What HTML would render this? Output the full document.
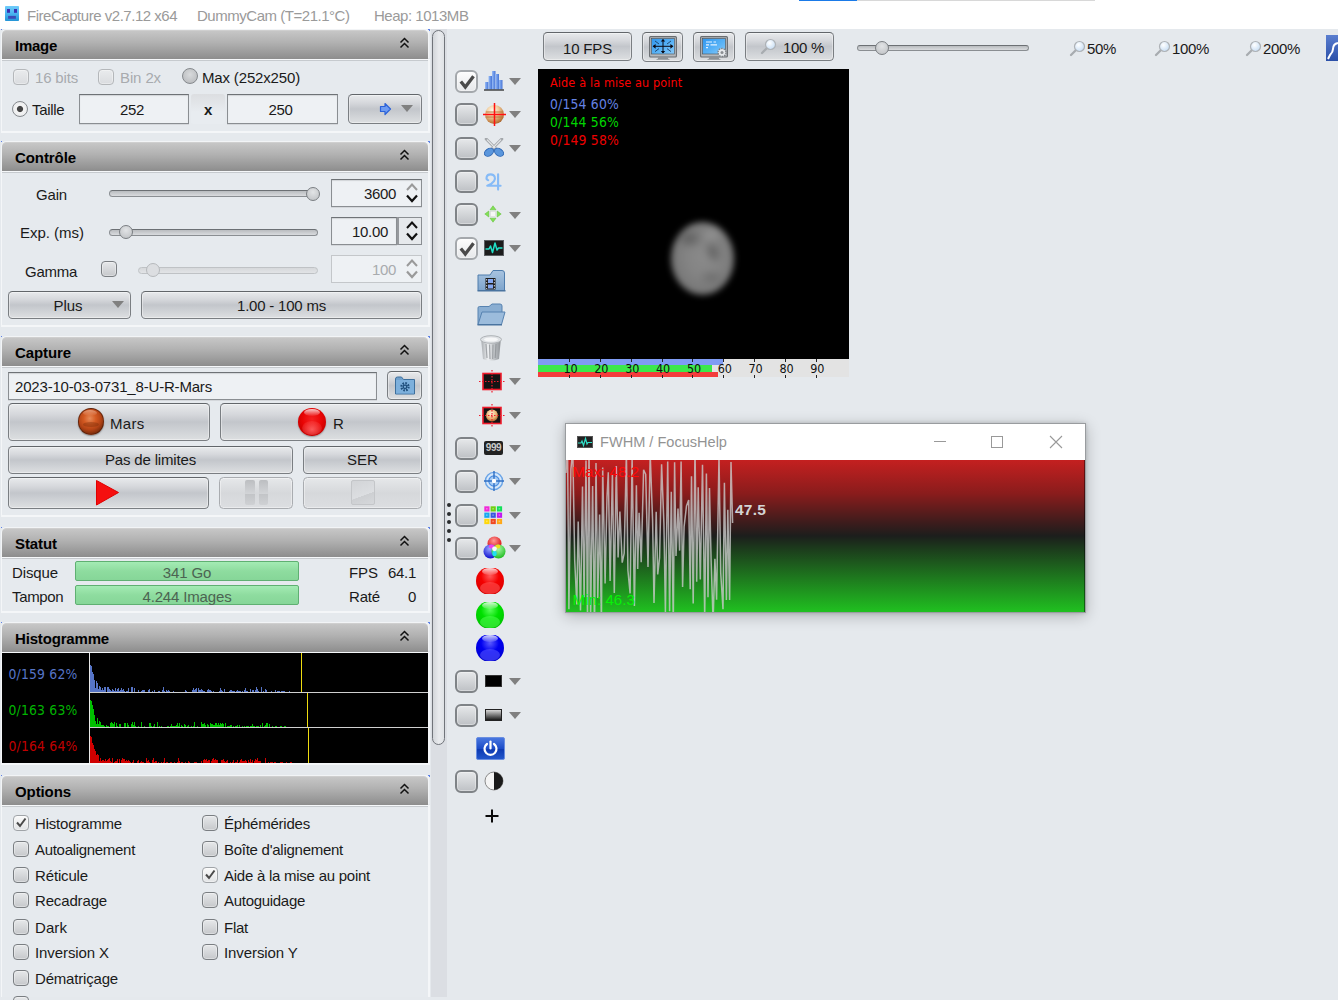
<!DOCTYPE html>
<html lang="fr"><head><meta charset="utf-8"><title>FireCapture</title>
<style>
*{box-sizing:border-box;margin:0;padding:0}
html,body{width:1338px;height:1000px;overflow:hidden;background:#e5e9ed;font-family:"Liberation Sans",sans-serif;font-size:15px;color:#1a1a1a}
.a{position:absolute}
#tb{left:0;top:0;width:1338px;height:28.7px;background:#fff}
#tb span{position:absolute;top:6.5px;font-size:15px;letter-spacing:-.47px;color:#9a9a9a;white-space:nowrap;line-height:17px}
.hdr{box-shadow:0 -1px 0 #f2f4f6,1.5px -1px 0 #f2f4f6,-1px 0 0 #f2f4f6;position:absolute;left:2px;width:425.5px;height:28.5px;margin-top:1px;border-radius:4.5px 4.5px 0 0;background:linear-gradient(#c6c6c6,#b2b2b2 40%,#8d8d8d);font-weight:bold;font-size:15px;line-height:17px;color:#000;padding:6px 0 0 13px;border-top:1px solid #cfcfcf}
.hdr svg{position:absolute;right:17.5px;top:6px}
.body{position:absolute;left:1px;width:428.5px;background:#e6eaee;border-left:1px solid #f4f6f8;border-right:2px solid #f4f6f8;border-bottom:2px solid #f4f6f8;border-top:1.5px solid #f6f8fa;box-shadow:inset 0 1px 0 #c6cace}
.btn{position:absolute;border:1.3px solid #7a7e82;border-top-color:#62666a;border-radius:4.5px;background:linear-gradient(#e8eaec,#d6d8dc 28%,#c3c6cb 50%,#cdd0d4 70%,#dddfe1);box-shadow:inset 0 0 0 1px rgba(255,255,255,.4);text-align:center;white-space:nowrap}
.btn.dis{border-color:#a9acb0;background:linear-gradient(#e6e8ea,#d6d8db 50%,#dcdee1)}
.tf{position:absolute;border:1px solid #8a8e92;border-top-color:#6e7276;background:#eef1f4;box-shadow:inset 0 1px 1px rgba(0,0,0,.12),0 1px 0 rgba(0,0,0,.08);white-space:nowrap}
.cb{position:absolute;width:16px;height:16px;border:1.3px solid #7a7e82;border-radius:4px;background:linear-gradient(#e6e8ea,#c6c8cb);box-shadow:inset 0 0 0 1px rgba(255,255,255,.35)}
.cb.on{background:linear-gradient(#fafafa,#e2e4e6);border-color:#a0a4a8}
.cb.dis{border-color:#b4b7ba;background:linear-gradient(#e9ebed,#dadcdf)}
.cb svg{position:absolute;left:0;top:0}
.cbx{position:absolute;width:23px;height:23px;border:2px solid #7f8387;border-radius:6px;background:linear-gradient(#e6e8ea,#bec1c5);box-shadow:inset 0 0 0 1px rgba(255,255,255,.35)}
.cbx.on{background:linear-gradient(#fdfdfd,#e6e8ea);border-color:#a4a8ac}
.rb{position:absolute;width:16px;height:16px;border:1px solid #85898d;border-radius:50%;background:radial-gradient(circle at 50% 40%,#d8dadc,#b4b6b9)}
.rb.on{background:radial-gradient(circle at 50% 50%,#444 0,#444 2.6px,#f4f4f4 3.6px,#e4e6e8 100%)}
.t{position:absolute;white-space:nowrap;line-height:17px}
.trk{position:absolute;height:7px;border-radius:4px;border:1px solid #8a8e92;border-top-color:#6c7074;background:linear-gradient(#b9bcbf,#d9dbde)}
.trk.dis{border-color:#bfc2c5;background:linear-gradient(#d6d8db,#e2e4e6)}
.thumb{position:absolute;width:14px;height:14px;border-radius:50%;border:1px solid #7a7e82;background:radial-gradient(circle at 50% 35%,#e2e4e6,#bcbfc2)}
.thumb.dis{border-color:#b6b9bc;background:#dcdee1}
.arr{position:absolute;width:0;height:0;border-left:6.7px solid transparent;border-right:6.7px solid transparent;border-top:7.3px solid #808080}
.tah{font-family:"DejaVu Sans Condensed","DejaVu Sans",sans-serif}
</style></head>
<body>
<div class="a" id="tb"><span style="left:27px">FireCapture v2.7.12 x64</span><span style="left:197px">DummyCam (T=21.1°C)</span><span style="left:374px">Heap: 1013MB</span></div>
<svg class="a" style="left:5px;top:6px" width="14" height="15" viewBox="0 0 14 15"><defs><linearGradient id="ic" x1="0" y1="0" x2="0" y2="1"><stop offset="0" stop-color="#70ccfa"/><stop offset=".5" stop-color="#4ab4f0"/><stop offset="1" stop-color="#2494d6"/></linearGradient></defs><rect width="14" height="15" rx=".8" fill="url(#ic)"/><rect x="2" y="3" width="3" height="3.8" fill="#3a30b0"/><rect x="9" y="3" width="3" height="3.8" fill="#3a30b0"/><rect x="3.1" y="9.9" width="7.8" height="2.9" fill="#3c4cb6"/></svg>
<div class="a" style="left:799px;top:0;width:58px;height:1px;background:#1a7ae8"></div><div class="a" style="left:857px;top:0;width:238px;height:1px;background:#d8d8d8"></div>
<div class="hdr" style="top:29px;letter-spacing:-0.270px;">Image<svg width="11" height="12" viewBox="0 0 11 12"><path d="M1.5 5.5 L5.5 1.5 L9.5 5.5 M1.5 10.5 L5.5 6.5 L9.5 10.5" fill="none" stroke="#111" stroke-width="1.5"/></svg></div><div class="a" style="left:1px;top:29px;width:2px;height:2px;background:linear-gradient(135deg,#5f82e6 50%,transparent 50%)"></div><div class="a" style="left:427.5px;top:29px;width:2px;height:2.5px;background:linear-gradient(225deg,#5f82e6 50%,transparent 50%)"></div>
<div class="body" style="top:58.5px;height:74.5px"></div>
<div class="cb dis" style="left:13px;top:69px"></div>
<div class="t " style="left:35px;top:69px;letter-spacing:-0.171px;color:#a8abae">16 bits</div>
<div class="cb dis" style="left:98px;top:69px"></div>
<div class="t " style="left:120px;top:69px;letter-spacing:-0.115px;color:#a8abae">Bin 2x</div>
<div class="rb" style="left:182px;top:68px"></div>
<div class="t " style="left:202px;top:69px;letter-spacing:-0.158px;">Max (252x250)</div>
<div class="rb on" style="left:12px;top:101px"></div>
<div class="t " style="left:32px;top:101px;letter-spacing:-0.307px;">Taille</div>
<div class="tf" style="left:79px;top:94px;width:110px;height:30px;line-height:29px;letter-spacing:-0.342px;text-align:center;padding-right:4px">252</div>
<div class="a" style="left:191px;top:94px;width:34px;height:30px;background:linear-gradient(#dcdee1,#e8ecf0 60%);border-radius:3px"></div>
<div class="t " style="left:204px;top:101px;letter-spacing:-0.342px;font-weight:bold">x</div>
<div class="tf" style="left:227px;top:94px;width:111px;height:30px;line-height:29px;letter-spacing:-0.342px;text-align:center;padding-right:4px">250</div>
<div class="btn " style="left:348px;top:94px;width:74px;height:30px;line-height:28px;"></div>
<svg class="a" style="left:379px;top:102px" width="13" height="14" viewBox="0 0 13 14"><path d="M1.5 4.5 H6 V1.5 L11.5 7 L6 12.5 V9.5 H1.5 Z" fill="#6f9cf2" stroke="#2c62d8" stroke-width="1.2" stroke-linejoin="round"/></svg>
<div class="arr" style="left:401px;top:105px"></div>
<div class="hdr" style="top:141px;letter-spacing:-0.083px;">Contrôle<svg width="11" height="12" viewBox="0 0 11 12"><path d="M1.5 5.5 L5.5 1.5 L9.5 5.5 M1.5 10.5 L5.5 6.5 L9.5 10.5" fill="none" stroke="#111" stroke-width="1.5"/></svg></div><div class="a" style="left:1px;top:141px;width:2px;height:2px;background:linear-gradient(135deg,#5f82e6 50%,transparent 50%)"></div><div class="a" style="left:427.5px;top:141px;width:2px;height:2.5px;background:linear-gradient(225deg,#5f82e6 50%,transparent 50%)"></div>
<div class="body" style="top:170.5px;height:156.5px"></div>
<div class="t " style="left:36px;top:186px;letter-spacing:-0.171px;">Gain</div>
<div class="trk" style="left:109px;top:190px;width:209px"></div><div class="thumb" style="left:306px;top:187px"></div>
<div class="tf" style="left:331px;top:179px;width:91px;height:28px;line-height:27px;letter-spacing:-0.342px;text-align:right;padding-right:25px">3600</div>
<svg class="a" style="left:405px;top:181px" width="14" height="24" viewBox="0 0 14 24"><path d="M2 9 L7 3.5 L12 9" fill="none" stroke="#9a9a9a" stroke-width="2"/><path d="M2 14.5 L7 20 L12 14.5" fill="none" stroke="#111" stroke-width="2.2"/></svg>
<div class="t " style="left:20px;top:224px;letter-spacing:-0.019px;">Exp. (ms)</div>
<div class="trk" style="left:109px;top:229px;width:209px"></div><div class="thumb" style="left:119px;top:225px"></div>
<div class="tf" style="left:331px;top:217px;width:66px;height:28px;line-height:27px;letter-spacing:-0.307px;text-align:right;padding-right:8px">10.00</div>
<div class="a" style="left:397px;top:217px;width:25px;height:28px;border:1px solid #8a8e92;border-left:2px solid #96999d;background:#e6e9ec"></div>
<svg class="a" style="left:405px;top:219px" width="14" height="24" viewBox="0 0 14 24"><path d="M2 9 L7 3.5 L12 9" fill="none" stroke="#111" stroke-width="2"/><path d="M2 14.5 L7 20 L12 14.5" fill="none" stroke="#111" stroke-width="2.2"/></svg>
<div class="t " style="left:25px;top:263px;letter-spacing:-0.268px;">Gamma</div>
<div class="cb" style="left:101px;top:261px"></div>
<div class="trk dis" style="left:138px;top:267px;width:180px"></div><div class="thumb dis" style="left:146px;top:263px"></div>
<div class="tf" style="left:331px;top:255px;width:91px;height:28px;line-height:27px;letter-spacing:-0.342px;text-align:right;padding-right:25px;color:#a8abae;border-color:#c4c7ca;box-shadow:none">100</div>
<svg class="a" style="left:405px;top:257px" width="14" height="24" viewBox="0 0 14 24"><path d="M2 9 L7 3.5 L12 9" fill="none" stroke="#9a9a9a" stroke-width="2"/><path d="M2 14.5 L7 20 L12 14.5" fill="none" stroke="#9a9a9a" stroke-width="2.2"/></svg>
<div class="btn " style="left:8px;top:291px;width:123px;height:28px;line-height:26px;letter-spacing:-0.045px;padding-right:3px;padding-top:1px">Plus</div>
<div class="arr" style="left:112px;top:301px"></div>
<div class="btn " style="left:141px;top:291px;width:281px;height:28px;line-height:26px;letter-spacing:-0.209px;padding-top:1px">1.00 - 100 ms</div>
<div class="hdr" style="top:336px;letter-spacing:-0.096px;">Capture<svg width="11" height="12" viewBox="0 0 11 12"><path d="M1.5 5.5 L5.5 1.5 L9.5 5.5 M1.5 10.5 L5.5 6.5 L9.5 10.5" fill="none" stroke="#111" stroke-width="1.5"/></svg></div><div class="a" style="left:1px;top:336px;width:2px;height:2px;background:linear-gradient(135deg,#5f82e6 50%,transparent 50%)"></div><div class="a" style="left:427.5px;top:336px;width:2px;height:2.5px;background:linear-gradient(225deg,#5f82e6 50%,transparent 50%)"></div>
<div class="body" style="top:365.5px;height:151.5px"></div>
<div class="tf" style="left:8px;top:372px;width:369px;height:28px;line-height:27px;letter-spacing:-0.183px;padding-left:6px">2023-10-03-0731_8-U-R-Mars</div>
<div class="btn " style="left:387px;top:371px;width:35px;height:29px;line-height:27px;"></div>
<svg class="a" style="left:395px;top:376px" width="20" height="19" viewBox="0 0 20 19"><path d="M0.5 18 V3 Q0.5 1 2.5 1 H6.5 L8.5 3.5 H19.5 V18 Z" fill="#6fa0cc" stroke="#3d6f9c" stroke-width="1"/><rect x="1" y="4" width="18" height="13.5" fill="#7db0dc"/><circle cx="10" cy="10.8" r="3.6" fill="none" stroke="#1f4f7c" stroke-width="2.2" stroke-dasharray="1.6 1.2"/><circle cx="10" cy="10.8" r="2.4" fill="#1f4f7c"/><circle cx="10" cy="10.8" r="1.1" fill="#7db0dc"/></svg>
<div class="btn " style="left:8px;top:403px;width:202px;height:38px;line-height:36px;"></div>
<div class="a" style="left:77.5px;top:408px;width:26.5px;height:26.5px;border-radius:50%;background:radial-gradient(circle at 45% 38%,#e68a58 0,#d45a22 30%,#b44416 55%,#88320e 72%,#4a1a06 100%);border:1px solid rgba(66,24,6,.6);box-shadow:0 1px 1.5px rgba(0,0,0,.35)"></div>
<div class="a" style="left:83px;top:422px;width:16px;height:5px;border-radius:50%;background:rgba(110,40,10,.35)"></div>
<div class="a" style="left:83px;top:410px;width:14px;height:6px;border-radius:50%;background:linear-gradient(rgba(255,220,200,.5),rgba(255,220,200,0))"></div>
<div class="t " style="left:110px;top:415px;letter-spacing:-0.083px;letter-spacing:.3px">Mars</div>
<div class="btn " style="left:220px;top:403px;width:202px;height:38px;line-height:36px;"></div>
<div class="a" style="left:298px;top:408px;width:28px;height:28px;border-radius:50%;background:radial-gradient(circle at 50% 40%,#f42020 0,#e80404 45%,#c80000 72%,#8a0000 100%);box-shadow:0 1px 1.5px rgba(0,0,0,.3)"></div>
<div class="a" style="left:302px;top:421px;width:20px;height:14px;border-radius:50%;background:radial-gradient(ellipse at 50% 60%,rgba(255,110,110,.8),rgba(255,90,90,.25) 70%,rgba(255,90,90,0))"></div>
<div class="a" style="left:304px;top:409px;width:16px;height:7px;border-radius:50%;background:linear-gradient(rgba(255,255,255,.8),rgba(255,255,255,.05))"></div>
<div class="t " style="left:333px;top:415px;letter-spacing:0.167px;">R</div>
<div class="btn " style="left:8px;top:446px;width:285px;height:28px;line-height:26px;letter-spacing:-0.169px;">Pas de limites</div>
<div class="btn " style="left:303px;top:446px;width:119px;height:28px;line-height:26px;letter-spacing:0.053px;">SER</div>
<div class="btn " style="left:8px;top:477px;width:201px;height:32px;line-height:30px;"></div>
<svg class="a" style="left:95px;top:479px" width="25" height="28" viewBox="0 0 25 28"><path d="M1.5 1.5 L23.5 13.5 L1.5 26 Z" fill="#f50f0f" stroke="#e00000" stroke-width="1" stroke-linejoin="round"/></svg>
<div class="btn dis" style="left:219px;top:477px;width:74px;height:32px;line-height:30px;"></div>
<div class="a" style="left:245px;top:480px;width:10px;height:25px;border-radius:2px;background:linear-gradient(#bcbec1,#d2d4d7 55%,#c2c4c7 56%,#cfd1d4)"></div><div class="a" style="left:259px;top:480px;width:9px;height:25px;border-radius:2px;background:linear-gradient(#bcbec1,#d2d4d7 55%,#c2c4c7 56%,#cfd1d4)"></div>
<div class="btn dis" style="left:303px;top:477px;width:119px;height:32px;line-height:30px;"></div>
<div class="a" style="left:351px;top:480px;width:24px;height:25px;border-radius:2px;background:linear-gradient(160deg,#d2d4d7,#dcdee1 60%,#cdcfd2 61%,#d6d8db);border:1px solid #c4c6c9"></div>
<div class="hdr" style="top:527px;letter-spacing:-0.083px;">Statut<svg width="11" height="12" viewBox="0 0 11 12"><path d="M1.5 5.5 L5.5 1.5 L9.5 5.5 M1.5 10.5 L5.5 6.5 L9.5 10.5" fill="none" stroke="#111" stroke-width="1.5"/></svg></div><div class="a" style="left:1px;top:527px;width:2px;height:2px;background:linear-gradient(135deg,#5f82e6 50%,transparent 50%)"></div><div class="a" style="left:427.5px;top:527px;width:2px;height:2.5px;background:linear-gradient(225deg,#5f82e6 50%,transparent 50%)"></div>
<div class="body" style="top:556.5px;height:56.5px"></div>
<div class="t " style="left:12px;top:564px;letter-spacing:-0.115px;">Disque</div>
<div class="t " style="left:12px;top:588px;letter-spacing:-0.338px;">Tampon</div>
<div class="a" style="left:75px;top:561px;width:224px;height:20px;border:1px solid #5fb072;background:linear-gradient(#a4ebb4,#8edc9f 50%,#86d698);text-align:center;color:#4c6452;line-height:21.5px;border-radius:2px;letter-spacing:-.15px">341 Go</div>
<div class="a" style="left:75px;top:585px;width:224px;height:20px;border:1px solid #5fb072;background:linear-gradient(#a4ebb4,#8edc9f 50%,#86d698);text-align:center;color:#4c6452;line-height:21.5px;border-radius:2px;letter-spacing:-.15px">4.244 Images</div>
<div class="t " style="left:349px;top:564px;letter-spacing:-0.057px;">FPS</div>
<div class="t " style="left:349px;top:588px;letter-spacing:-0.171px;">Raté</div>
<div class="t " style="left:380px;top:564px;letter-spacing:-0.299px;width:36px;text-align:right">64.1</div>
<div class="t " style="left:380px;top:588px;letter-spacing:-0.342px;width:36px;text-align:right">0</div>
<div class="hdr" style="top:622px;letter-spacing:-0.169px;">Histogramme<svg width="11" height="12" viewBox="0 0 11 12"><path d="M1.5 5.5 L5.5 1.5 L9.5 5.5 M1.5 10.5 L5.5 6.5 L9.5 10.5" fill="none" stroke="#111" stroke-width="1.5"/></svg></div><div class="a" style="left:1px;top:622px;width:2px;height:2px;background:linear-gradient(135deg,#5f82e6 50%,transparent 50%)"></div><div class="a" style="left:427.5px;top:622px;width:2px;height:2.5px;background:linear-gradient(225deg,#5f82e6 50%,transparent 50%)"></div>
<div class="body" style="top:651.5px;height:113.5px"></div>
<div class="a" style="left:2px;top:653px;width:426px;height:110px;background:#000"></div>
<svg class="a" style="left:2px;top:653px" width="426" height="110" viewBox="0 0 426 110" shape-rendering="crispEdges"><rect x="87" y="0" width="1" height="110" fill="#e8e8e8"/><rect x="88" y="39" width="338" height="1" fill="#d0d0d0"/><rect x="88" y="74" width="338" height="1" fill="#d0d0d0"/><path d="M88 39v-27h1v27zM89 39v-26h1v26zM90 39v-20h1v20zM91 39v-18h1v18zM92 39v-12h1v12zM93 39v-4h1v4zM94 39v-11h1v11zM95 39v-9h1v9zM96 39v-3h1v3zM97 39v-6h1v6zM98 39v-5h1v5zM99 39v-2h1v2zM100 39v-4h1v4zM101 39v-2h1v2zM102 39v-5h1v5zM103 39v-5h1v5zM105 39v-5h1v5zM106 39v-5h1v5zM107 39v-3h1v3zM108 39v-2h1v2zM109 39v-1h1v1zM110 39v-3h1v3zM111 39v-2h1v2zM112 39v-1h1v1zM113 39v-4h1v4zM114 39v-1h1v1zM115 39v-3h1v3zM116 39v-4h1v4zM117 39v-1h1v1zM118 39v-2h1v2zM119 39v-4h1v4zM120 39v-2h1v2zM121 39v-3h1v3zM122 39v-1h1v1zM124 39v-1h1v1zM125 39v-1h1v1zM126 39v-4h1v4zM129 39v-5h1v5zM130 39v-5h1v5zM132 39v-4h1v4zM136 39v-2h1v2zM139 39v-1h1v1zM140 39v-2h1v2zM141 39v-2h1v2zM142 39v-2h1v2zM146 39v-2h1v2zM147 39v-3h1v3zM150 39v-1h1v1zM152 39v-2h1v2zM156 39v-1h1v1zM157 39v-1h1v1zM160 39v-2h1v2zM161 39v-5h1v5zM162 39v-1h1v1zM164 39v-2h1v2zM165 39v-1h1v1zM166 39v-2h1v2zM167 39v-1h1v1zM171 39v-1h1v1zM183 39v-2h1v2zM184 39v-1h1v1zM190 39v-2h1v2zM191 39v-4h1v4zM192 39v-2h1v2zM193 39v-3h1v3zM194 39v-4h1v4zM196 39v-4h1v4zM197 39v-2h1v2zM198 39v-2h1v2zM199 39v-3h1v3zM200 39v-2h1v2zM201 39v-1h1v1zM202 39v-1h1v1zM205 39v-2h1v2zM206 39v-3h1v3zM207 39v-2h1v2zM208 39v-2h1v2zM209 39v-1h1v1zM211 39v-1h1v1zM217 39v-1h1v1zM218 39v-4h1v4zM219 39v-2h1v2zM220 39v-1h1v1zM222 39v-3h1v3zM227 39v-1h1v1zM228 39v-2h1v2zM229 39v-2h1v2zM230 39v-1h1v1zM231 39v-1h1v1zM232 39v-1h1v1zM234 39v-1h1v1zM235 39v-2h1v2zM236 39v-1h1v1zM237 39v-1h1v1zM238 39v-1h1v1zM240 39v-1h1v1zM242 39v-2h1v2zM243 39v-4h1v4zM244 39v-1h1v1zM245 39v-1h1v1zM248 39v-3h1v3zM250 39v-2h1v2zM251 39v-2h1v2zM253 39v-2h1v2zM254 39v-5h1v5zM255 39v-3h1v3zM256 39v-1h1v1zM259 39v-5h1v5zM261 39v-1h1v1zM263 39v-3h1v3zM264 39v-2h1v2zM269 39v-1h1v1zM273 39v-2h1v2zM275 39v-1h1v1zM276 39v-1h1v1zM277 39v-1h1v1zM279 39v-1h1v1zM280 39v-1h1v1zM281 39v-1h1v1zM282 39v-1h1v1zM287 39v-1h1v1z" fill="#5674c6"/><rect x="299" y="0" width="1" height="39" fill="#eedc10"/><path d="M88 74v-27h1v27zM89 74v-26h1v26zM90 74v-22h1v22zM91 74v-18h1v18zM92 74v-12h1v12zM93 74v-6h1v6zM94 74v-3h1v3zM95 74v-9h1v9zM96 74v-3h1v3zM97 74v-6h1v6zM98 74v-5h1v5zM99 74v-2h1v2zM100 74v-2h1v2zM101 74v-2h1v2zM102 74v-1h1v1zM104 74v-2h1v2zM105 74v-1h1v1zM106 74v-1h1v1zM108 74v-4h1v4zM109 74v-5h1v5zM110 74v-4h1v4zM111 74v-3h1v3zM112 74v-5h1v5zM114 74v-4h1v4zM115 74v-1h1v1zM117 74v-3h1v3zM118 74v-3h1v3zM122 74v-4h1v4zM123 74v-4h1v4zM125 74v-4h1v4zM126 74v-2h1v2zM129 74v-3h1v3zM130 74v-5h1v5zM131 74v-2h1v2zM132 74v-5h1v5zM133 74v-1h1v1zM136 74v-1h1v1zM139 74v-5h1v5zM142 74v-1h1v1zM147 74v-4h1v4zM148 74v-4h1v4zM149 74v-1h1v1zM151 74v-1h1v1zM152 74v-3h1v3zM155 74v-5h1v5zM157 74v-1h1v1zM159 74v-1h1v1zM165 74v-1h1v1zM166 74v-1h1v1zM168 74v-1h1v1zM169 74v-3h1v3zM170 74v-1h1v1zM171 74v-1h1v1zM172 74v-1h1v1zM173 74v-1h1v1zM174 74v-2h1v2zM175 74v-4h1v4zM176 74v-1h1v1zM177 74v-4h1v4zM179 74v-2h1v2zM180 74v-1h1v1zM182 74v-3h1v3zM183 74v-2h1v2zM185 74v-1h1v1zM186 74v-2h1v2zM189 74v-1h1v1zM191 74v-1h1v1zM192 74v-5h1v5zM195 74v-1h1v1zM199 74v-5h1v5zM200 74v-3h1v3zM201 74v-3h1v3zM202 74v-4h1v4zM203 74v-2h1v2zM205 74v-3h1v3zM206 74v-2h1v2zM208 74v-4h1v4zM209 74v-3h1v3zM210 74v-3h1v3zM211 74v-2h1v2zM212 74v-2h1v2zM213 74v-4h1v4zM214 74v-4h1v4zM215 74v-2h1v2zM216 74v-4h1v4zM217 74v-2h1v2zM218 74v-4h1v4zM219 74v-3h1v3zM220 74v-4h1v4zM221 74v-3h1v3zM223 74v-4h1v4zM225 74v-1h1v1zM226 74v-1h1v1zM227 74v-1h1v1zM228 74v-2h1v2zM229 74v-2h1v2zM231 74v-1h1v1zM233 74v-1h1v1zM234 74v-1h1v1zM235 74v-2h1v2zM237 74v-2h1v2zM240 74v-1h1v1zM242 74v-1h1v1zM244 74v-1h1v1zM245 74v-1h1v1zM246 74v-1h1v1zM248 74v-1h1v1zM249 74v-1h1v1zM250 74v-3h1v3zM251 74v-1h1v1zM252 74v-1h1v1zM254 74v-1h1v1zM255 74v-1h1v1zM256 74v-1h1v1zM258 74v-2h1v2zM260 74v-4h1v4zM262 74v-1h1v1zM263 74v-2h1v2zM264 74v-4h1v4zM265 74v-4h1v4zM267 74v-3h1v3zM270 74v-1h1v1zM273 74v-1h1v1zM274 74v-1h1v1zM278 74v-1h1v1zM279 74v-1h1v1zM282 74v-1h1v1zM283 74v-1h1v1z" fill="#00c000"/><rect x="305" y="40" width="1" height="34" fill="#eedc10"/><path d="M88 110v-27h1v27zM89 110v-26h1v26zM90 110v-20h1v20zM91 110v-18h1v18zM92 110v-14h1v14zM93 110v-12h1v12zM94 110v-8h1v8zM95 110v-9h1v9zM96 110v-8h1v8zM97 110v-2h1v2zM98 110v-5h1v5zM99 110v-2h1v2zM100 110v-3h1v3zM101 110v-3h1v3zM102 110v-2h1v2zM103 110v-4h1v4zM104 110v-2h1v2zM105 110v-3h1v3zM106 110v-4h1v4zM107 110v-5h1v5zM108 110v-2h1v2zM109 110v-1h1v1zM110 110v-5h1v5zM112 110v-1h1v1zM113 110v-2h1v2zM114 110v-2h1v2zM115 110v-4h1v4zM117 110v-4h1v4zM119 110v-3h1v3zM120 110v-5h1v5zM121 110v-4h1v4zM122 110v-4h1v4zM123 110v-2h1v2zM124 110v-3h1v3zM125 110v-2h1v2zM126 110v-3h1v3zM127 110v-2h1v2zM128 110v-1h1v1zM130 110v-1h1v1zM131 110v-3h1v3zM135 110v-2h1v2zM136 110v-3h1v3zM138 110v-1h1v1zM139 110v-2h1v2zM140 110v-1h1v1zM141 110v-1h1v1zM144 110v-5h1v5zM145 110v-2h1v2zM146 110v-3h1v3zM147 110v-1h1v1zM150 110v-3h1v3zM151 110v-5h1v5zM152 110v-1h1v1zM153 110v-2h1v2zM154 110v-2h1v2zM156 110v-1h1v1zM159 110v-1h1v1zM161 110v-1h1v1zM162 110v-5h1v5zM164 110v-1h1v1zM165 110v-1h1v1zM168 110v-1h1v1zM169 110v-1h1v1zM172 110v-1h1v1zM175 110v-1h1v1zM176 110v-5h1v5zM177 110v-2h1v2zM179 110v-1h1v1zM180 110v-1h1v1zM183 110v-1h1v1zM186 110v-2h1v2zM187 110v-1h1v1zM192 110v-1h1v1zM193 110v-1h1v1zM194 110v-1h1v1zM199 110v-2h1v2zM201 110v-3h1v3zM202 110v-4h1v4zM203 110v-3h1v3zM204 110v-4h1v4zM205 110v-2h1v2zM206 110v-3h1v3zM207 110v-3h1v3zM209 110v-2h1v2zM210 110v-4h1v4zM211 110v-5h1v5zM212 110v-3h1v3zM213 110v-4h1v4zM214 110v-3h1v3zM215 110v-3h1v3zM219 110v-3h1v3zM220 110v-3h1v3zM221 110v-4h1v4zM222 110v-2h1v2zM223 110v-1h1v1zM224 110v-2h1v2zM225 110v-3h1v3zM228 110v-1h1v1zM230 110v-1h1v1zM231 110v-3h1v3zM233 110v-1h1v1zM234 110v-1h1v1zM235 110v-3h1v3zM237 110v-1h1v1zM238 110v-3h1v3zM239 110v-4h1v4zM240 110v-2h1v2zM241 110v-2h1v2zM242 110v-2h1v2zM243 110v-3h1v3zM244 110v-2h1v2zM246 110v-3h1v3zM247 110v-1h1v1zM248 110v-4h1v4zM249 110v-1h1v1zM250 110v-3h1v3zM252 110v-2h1v2zM253 110v-4h1v4zM254 110v-3h1v3zM255 110v-5h1v5zM256 110v-2h1v2zM257 110v-2h1v2zM258 110v-2h1v2zM263 110v-5h1v5zM266 110v-1h1v1zM268 110v-1h1v1zM269 110v-1h1v1zM270 110v-1h1v1zM272 110v-1h1v1zM273 110v-1h1v1zM278 110v-1h1v1zM279 110v-1h1v1zM280 110v-1h1v1zM284 110v-1h1v1zM288 110v-1h1v1zM289 110v-1h1v1z" fill="#d00000"/><rect x="306" y="75" width="1" height="35" fill="#eedc10"/></svg>
<div class="t tah" style="left:8.5px;top:665.7px;color:#5674c6;font-size:13.8px;letter-spacing:0.188px">0/159 62%</div>
<div class="t tah" style="left:8.5px;top:702.3px;color:#00b400;font-size:13.8px;letter-spacing:0.188px">0/163 63%</div>
<div class="t tah" style="left:8.5px;top:738px;color:#c00000;font-size:13.8px;letter-spacing:0.188px">0/164 64%</div>
<div class="hdr" style="top:775px;letter-spacing:-0.094px;">Options<svg width="11" height="12" viewBox="0 0 11 12"><path d="M1.5 5.5 L5.5 1.5 L9.5 5.5 M1.5 10.5 L5.5 6.5 L9.5 10.5" fill="none" stroke="#111" stroke-width="1.5"/></svg></div><div class="a" style="left:1px;top:775px;width:2px;height:2px;background:linear-gradient(135deg,#5f82e6 50%,transparent 50%)"></div><div class="a" style="left:427.5px;top:775px;width:2px;height:2.5px;background:linear-gradient(225deg,#5f82e6 50%,transparent 50%)"></div>
<div class="body" style="top:804.5px;height:192.5px;border-bottom:none"></div>
<div class="cb on" style="left:13px;top:815px"><svg width="14" height="14" viewBox="0 0 14 14"><path d="M3 6.5 L6 10 L11.5 2.5" fill="none" stroke="#4a4a4a" stroke-width="2"/></svg></div>
<div class="t " style="left:35px;top:815px;letter-spacing:-0.199px;">Histogramme</div>
<div class="cb" style="left:13px;top:840.7px"></div>
<div class="t " style="left:35px;top:840.7px;letter-spacing:-0.303px;">Autoalignement</div>
<div class="cb" style="left:13px;top:866.6px"></div>
<div class="t " style="left:35px;top:866.6px;letter-spacing:-0.149px;">Réticule</div>
<div class="cb" style="left:13px;top:892.2px"></div>
<div class="t " style="left:35px;top:892.2px;letter-spacing:-0.153px;">Recadrage</div>
<div class="cb" style="left:13px;top:918.8px"></div>
<div class="t " style="left:35px;top:918.8px;letter-spacing:0.083px;">Dark</div>
<div class="cb" style="left:13px;top:944.4px"></div>
<div class="t " style="left:35px;top:944.4px;letter-spacing:-0.094px;">Inversion X</div>
<div class="cb" style="left:13px;top:970.2px"></div>
<div class="t " style="left:35px;top:970.2px;letter-spacing:-0.185px;">Dématriçage</div>
<div class="cb" style="left:13px;top:996px"></div>
<div class="cb" style="left:202px;top:815px"></div>
<div class="t " style="left:224px;top:815px;letter-spacing:-0.216px;">Éphémérides</div>
<div class="cb" style="left:202px;top:840.7px"></div>
<div class="t " style="left:224px;top:840.7px;letter-spacing:-0.266px;">Boîte d'alignement</div>
<div class="cb on" style="left:202px;top:866.6px"><svg width="14" height="14" viewBox="0 0 14 14"><path d="M3 6.5 L6 10 L11.5 2.5" fill="none" stroke="#4a4a4a" stroke-width="2"/></svg></div>
<div class="t " style="left:224px;top:866.6px;letter-spacing:-0.250px;">Aide à la mise au point</div>
<div class="cb" style="left:202px;top:892.2px"></div>
<div class="t " style="left:224px;top:892.2px;letter-spacing:-0.295px;">Autoguidage</div>
<div class="cb" style="left:202px;top:918.8px"></div>
<div class="t " style="left:224px;top:918.8px;letter-spacing:-0.251px;">Flat</div>
<div class="cb" style="left:202px;top:944.4px"></div>
<div class="t " style="left:224px;top:944.4px;letter-spacing:-0.094px;">Inversion Y</div>
<div class="a" style="left:431px;top:29px;width:16px;height:968px;background:#dbdee3"></div>
<div class="a" style="left:432px;top:30px;width:13px;height:715px;border:1.5px solid #70747a;border-radius:6.5px;background:linear-gradient(90deg,#d3d6da,#e9ebee 55%,#dfe2e5)"></div>
<div class="cbx on" style="left:455px;top:70.0px"><svg class="a" style="left:0;top:0" width="20" height="20" viewBox="0 0 20 20"><path d="M3.8 9.5 L8.3 15 L16.5 4.2" fill="none" stroke="#4a4a4a" stroke-width="3.3"/></svg></div>
<svg class="a" style="left:484px;top:70.0px" width="20" height="21" viewBox="0 0 20 21"><defs><linearGradient id="hb" x1="0" x2="1"><stop offset="0" stop-color="#9abcf4"/><stop offset=".5" stop-color="#6a96e8"/><stop offset="1" stop-color="#4a76d4"/></linearGradient></defs><rect x="1" y="12" width="3.5" height="7.5" fill="url(#hb)"/><rect x="4.5" y="6" width="3.5" height="13.5" fill="url(#hb)"/><rect x="8" y="1" width="3.5" height="18.5" fill="url(#hb)"/><rect x="11.5" y="4" width="3.5" height="15.5" fill="url(#hb)"/><rect x="15" y="10" width="3.5" height="9.5" fill="url(#hb)"/><rect x="0" y="19.3" width="20" height="1.4" fill="#3a3a3a"/></svg>
<div class="arr" style="left:509.3px;top:78.1px"></div>
<div class="cbx" style="left:455px;top:103.3px"></div>
<svg class="a" style="left:483px;top:103.3px" width="23" height="23" viewBox="0 0 23 23"><defs><radialGradient id="jp" cx=".4" cy=".3" r=".8"><stop offset="0" stop-color="#fffaf0"/><stop offset=".4" stop-color="#f0cc9c"/><stop offset=".8" stop-color="#c07a3c"/><stop offset="1" stop-color="#8a4a1c"/></radialGradient></defs><circle cx="11.5" cy="11.5" r="9.5" fill="url(#jp)"/><path d="M3 9 H20 M2.5 14 H20.5" stroke="#b86c34" stroke-width="1.6" opacity=".6"/><path d="M11.5 0 V23 M0 11.5 H23" stroke="#ff1010" stroke-width="1.5"/></svg>
<div class="arr" style="left:509.3px;top:111.39999999999999px"></div>
<div class="cbx" style="left:455px;top:136.7px"></div>
<svg class="a" style="left:484px;top:137.7px" width="20" height="19" viewBox="0 0 20 19"><path d="M2.2 1 L12.8 11.8 M17.8 1 L7.2 11.8" stroke="#a4a8ac" stroke-width="3" stroke-linecap="round"/><path d="M3 1.6 L12 10.8 M17 1.6 L8 10.8" stroke="#e8eaec" stroke-width="1.1"/><ellipse cx="5" cy="14.2" rx="5" ry="3.5" transform="rotate(-35 5 14.2)" fill="#5a96dc" stroke="#2f68b4" stroke-width="1"/><ellipse cx="15" cy="14.2" rx="5" ry="3.5" transform="rotate(35 15 14.2)" fill="#5a96dc" stroke="#2f68b4" stroke-width="1"/></svg>
<div class="arr" style="left:509.3px;top:144.79999999999998px"></div>
<div class="cbx" style="left:455px;top:170.1px"></div>
<svg class="a" style="left:484px;top:172.1px" width="18" height="19" viewBox="0 0 18 19"><path d="M4.2 8.3 C1.6 7.6 1.8 2.4 6.7 2.4 C10.8 2.4 12 6.2 10 9.2 C8.4 11.6 6 13 3.2 13.8 H16.6 M14.1 2.3 V17.6" fill="none" stroke="#86bbf7" stroke-width="2.1" stroke-linecap="round" stroke-linejoin="round"/></svg>
<div class="cbx" style="left:455px;top:203.4px"></div>
<svg class="a" style="left:484px;top:205.4px" width="18" height="18" viewBox="0 0 18 18"><g fill="#84e058" stroke="#5cbc34" stroke-width=".5"><path d="M9 0.8 L12 4.8 H6 Z"/><path d="M9 17.2 L12 13.2 H6 Z"/><path d="M0.8 9 L4.8 6 V12 Z"/><path d="M17.2 9 L13.2 6 V12 Z"/></g><rect x="6.3" y="6.3" width="5.4" height="5.4" fill="#f6f8f6" stroke="#d0d4d0" stroke-width=".5"/></svg>
<div class="arr" style="left:509.3px;top:211.5px"></div>
<div class="cbx on" style="left:455px;top:236.8px"><svg class="a" style="left:0;top:0" width="20" height="20" viewBox="0 0 20 20"><path d="M3.8 9.5 L8.3 15 L16.5 4.2" fill="none" stroke="#4a4a4a" stroke-width="3.3"/></svg></div>
<svg class="a" style="left:484px;top:239.8px" width="20" height="16" viewBox="0 0 20 16"><rect x="0" y="0" width="20" height="16" fill="#1c1c1c"/><rect x="0.5" y="0.5" width="19" height="15" fill="none" stroke="#5a5e62" stroke-width="1"/><path d="M1.5 9 H5 L6.5 6 L8.5 12.5 L11 3 L13 10 L14.5 8 H18.5" fill="none" stroke="#20e0c8" stroke-width="1.5" stroke-linejoin="round"/></svg>
<div class="arr" style="left:509.3px;top:244.9px"></div>
<svg class="a" style="left:477px;top:269.1px" width="29" height="23" viewBox="0 0 29 23"><defs><linearGradient id="fg" x1="0" y1="0" x2="0" y2="1"><stop offset="0" stop-color="#a8c4e0"/><stop offset="1" stop-color="#7ea4cc"/></linearGradient></defs><path d="M1 21.5 V6 H13 L16 1.5 H25 Q27.5 1.5 27.5 4 V21.5 Z" fill="url(#fg)" stroke="#4e7cac" stroke-width="1"/><rect x="0.5" y="21" width="28" height="1.5" fill="#4a74a0"/><rect x="8.5" y="9" width="10" height="11.5" fill="#1c1c1c"/><rect x="11" y="10" width="5" height="4" fill="#86a8f0"/><rect x="11" y="15.5" width="5" height="4" fill="#86a8f0"/><path d="M9.7 10 v1.5 M9.7 13 v1.5 M9.7 16 v1.5 M9.7 19 v1 M17.3 10 v1.5 M17.3 13 v1.5 M17.3 16 v1.5 M17.3 19 v1" stroke="#ddd" stroke-width="1"/></svg>
<svg class="a" style="left:477px;top:302.5px" width="29" height="23" viewBox="0 0 29 23"><path d="M1 21.5 V5 Q1 3.5 2.5 3.5 H12 L15 1 H23 Q25 1 25 3 V9" fill="#8aaed2" stroke="#5682b0" stroke-width="1"/><path d="M1 21.5 L5 9 H28 L24.5 21.5 Z" fill="#9cbcdc" stroke="#5682b0" stroke-width="1" stroke-linejoin="round"/><rect x="0.5" y="21" width="24.5" height="1.5" fill="#4a74a0"/></svg>
<svg class="a" style="left:480px;top:334.8px" width="22" height="26" viewBox="0 0 22 26"><defs><linearGradient id="tg" x1="0" x2="1"><stop offset="0" stop-color="#a8acb0"/><stop offset=".35" stop-color="#eef0f2"/><stop offset=".7" stop-color="#babec2"/><stop offset="1" stop-color="#8e9296"/></linearGradient></defs><path d="M1.2 5 L3 24 Q11 27 19 24 L20.8 5 Z" fill="url(#tg)"/><ellipse cx="11" cy="4.5" rx="10.5" ry="3.8" fill="#dfe2e5" stroke="#aeb2b6" stroke-width="1"/><ellipse cx="11" cy="4.5" rx="7" ry="2" fill="#f6f7f8"/><path d="M6 9 L7 23 M9.5 9.5 L10 24 M13 9.5 L12.7 24 M16 9 L15.2 23" stroke="#8e9296" stroke-width="1.2" opacity=".75"/></svg>
<svg class="a" style="left:479px;top:370.2px" width="26" height="23" viewBox="0 0 26 23"><rect x="4" y="3.5" width="18" height="16" fill="#141414" stroke="#f01c2c" stroke-width="1.6"/><path d="M13 0 V23 M0 11.5 H26" stroke="#f01c2c" stroke-width="1.2" stroke-dasharray="1.5 1.5"/></svg>
<div class="arr" style="left:509.3px;top:378.3px"></div>
<svg class="a" style="left:479px;top:403.5px" width="26" height="23" viewBox="0 0 26 23"><defs><radialGradient id="pl" cx=".45" cy=".35" r=".7"><stop offset="0" stop-color="#fff6e0"/><stop offset=".6" stop-color="#e8b070"/><stop offset="1" stop-color="#9a5420"/></radialGradient></defs><rect x="4" y="3.5" width="18" height="16" fill="#141414" stroke="#f01c2c" stroke-width="1.6"/><circle cx="13" cy="11.5" r="6" fill="url(#pl)"/><path d="M13 0 V23 M0 11.5 H26" stroke="#f01c2c" stroke-width="1.2" stroke-dasharray="1.5 1.5"/></svg>
<div class="arr" style="left:509.3px;top:411.6px"></div>
<div class="cbx" style="left:455px;top:436.9px"></div>
<div class="a" style="left:484px;top:440.9px;width:19px;height:14px;border-radius:2px;background:#222;color:#c8c8c8;font:bold 10px/14px 'Liberation Sans',sans-serif;text-align:center;letter-spacing:-.4px">999</div>
<div class="arr" style="left:509.3px;top:445.0px"></div>
<div class="cbx" style="left:455px;top:470.2px"></div>
<svg class="a" style="left:484px;top:471.2px" width="20" height="20" viewBox="0 0 20 20"><circle cx="10" cy="10" r="8.6" fill="#d6e8fb" stroke="#6aa4e6" stroke-width="1.4"/><circle cx="10" cy="10" r="5.2" fill="#a6ccf6" stroke="#4c8ee0" stroke-width="1.2"/><path d="M10 0 V20 M0 10 H20" stroke="#2f6fc4" stroke-width="1.4"/><circle cx="10" cy="10" r="2.2" fill="#fff"/></svg>
<div class="arr" style="left:509.3px;top:478.3px"></div>
<div class="cbx" style="left:455px;top:503.5px"></div>
<svg class="a" style="left:484px;top:505.5px" width="19" height="19" viewBox="0 0 19 19"><rect x="0.3" y="0.3" width="5.2" height="5.2" fill="#f028d8"/><rect x="2.0" y="2.0" width="1.6" height="1.6" fill="#fff" opacity=".35"/><rect x="6.6" y="0.3" width="5.2" height="5.2" fill="#70d010"/><rect x="8.3" y="2.0" width="1.6" height="1.6" fill="#fff" opacity=".35"/><rect x="12.9" y="0.3" width="5.2" height="5.2" fill="#10e058"/><rect x="14.6" y="2.0" width="1.6" height="1.6" fill="#fff" opacity=".35"/><rect x="0.3" y="6.6" width="5.2" height="5.2" fill="#18a8f0"/><rect x="2.0" y="8.3" width="1.6" height="1.6" fill="#fff" opacity=".35"/><rect x="6.6" y="6.6" width="5.2" height="5.2" fill="#3858e0"/><rect x="8.3" y="8.3" width="1.6" height="1.6" fill="#fff" opacity=".35"/><rect x="12.9" y="6.6" width="5.2" height="5.2" fill="#c018f0"/><rect x="14.6" y="8.3" width="1.6" height="1.6" fill="#fff" opacity=".35"/><rect x="0.3" y="12.9" width="5.2" height="5.2" fill="#ffd808"/><rect x="2.0" y="14.6" width="1.6" height="1.6" fill="#fff" opacity=".35"/><rect x="6.6" y="12.9" width="5.2" height="5.2" fill="#f04820"/><rect x="8.3" y="14.6" width="1.6" height="1.6" fill="#fff" opacity=".35"/><rect x="12.9" y="12.9" width="5.2" height="5.2" fill="#ffa818"/><rect x="14.6" y="14.6" width="1.6" height="1.6" fill="#fff" opacity=".35"/></svg>
<div class="arr" style="left:509.3px;top:511.6px"></div>
<div class="cbx" style="left:455px;top:536.9px"></div>
<svg class="a" style="left:483px;top:535.9px" width="23" height="24" viewBox="0 0 23 24"><defs><radialGradient id="r1" cx=".45" cy=".3" r=".7"><stop offset="0" stop-color="#ff9a9a"/><stop offset="1" stop-color="#d80000"/></radialGradient><radialGradient id="g1" cx=".45" cy=".3" r=".7"><stop offset="0" stop-color="#a8ffa8"/><stop offset="1" stop-color="#10b810"/></radialGradient><radialGradient id="b1" cx=".45" cy=".3" r=".7"><stop offset="0" stop-color="#9aa8ff"/><stop offset="1" stop-color="#1010d0"/></radialGradient></defs><circle cx="11.5" cy="7.5" r="7" fill="url(#r1)"/><circle cx="7.5" cy="15.5" r="7" fill="url(#b1)"/><circle cx="15.5" cy="15.5" r="7" fill="url(#g1)" opacity=".92"/><ellipse cx="8.5" cy="10.5" rx="2.6" ry="2" fill="#f040f0"/><ellipse cx="15" cy="10.5" rx="2.4" ry="2" fill="#f0e020"/><ellipse cx="11.5" cy="17.5" rx="2.2" ry="2.8" fill="#20e0f0"/><circle cx="11.5" cy="12.8" r="2.4" fill="#f8f8f8"/></svg>
<div class="arr" style="left:509.3px;top:545.0px"></div>
<div class="a" style="left:476px;top:568.2px;width:28px;height:26px;overflow:hidden"><div class="a" style="left:0;top:-1px;width:28px;height:28px;border-radius:50%;background:radial-gradient(circle at 50% 32%,#ff5a5a 0,#f40000 38%,#e00000 72%,#a00000 100%)"></div><div class="a" style="left:6px;top:0px;width:16px;height:7px;border-radius:50%;background:linear-gradient(rgba(255,255,255,.85),rgba(255,255,255,.1))"></div><div class="a" style="left:4px;top:14px;width:20px;height:12px;border-radius:50%;background:rgba(255,90,90,.55)"></div></div>
<div class="a" style="left:476px;top:601.6px;width:28px;height:26px;overflow:hidden"><div class="a" style="left:0;top:-1px;width:28px;height:28px;border-radius:50%;background:radial-gradient(circle at 50% 32%,#5aff5a 0,#00e000 38%,#00c800 72%,#008a00 100%)"></div><div class="a" style="left:6px;top:0px;width:16px;height:7px;border-radius:50%;background:linear-gradient(rgba(255,255,255,.85),rgba(255,255,255,.1))"></div><div class="a" style="left:4px;top:14px;width:20px;height:12px;border-radius:50%;background:rgba(90,255,90,.5)"></div></div>
<div class="a" style="left:476px;top:635.0px;width:28px;height:26px;overflow:hidden"><div class="a" style="left:0;top:-1px;width:28px;height:28px;border-radius:50%;background:radial-gradient(circle at 50% 32%,#5a5aff 0,#0000f0 38%,#0000d8 72%,#00008a 100%)"></div><div class="a" style="left:6px;top:0px;width:16px;height:7px;border-radius:50%;background:linear-gradient(rgba(255,255,255,.85),rgba(255,255,255,.1))"></div><div class="a" style="left:4px;top:14px;width:20px;height:12px;border-radius:50%;background:rgba(90,90,255,.55)"></div></div>
<div class="cbx" style="left:455px;top:670.3px"></div>
<div class="a" style="left:485px;top:675.3px;width:17px;height:12px;background:#000;border:1px solid #333"></div>
<div class="arr" style="left:509.3px;top:678.4px"></div>
<div class="cbx" style="left:455px;top:703.6px"></div>
<div class="a" style="left:485px;top:708.6px;width:17px;height:12px;background:linear-gradient(#d8d8d8,#666 60%,#1a1a1a);border:1.5px solid #222"></div>
<div class="arr" style="left:509.3px;top:711.7px"></div>
<svg class="a" style="left:476px;top:737.0px" width="29" height="23" viewBox="0 0 29 23"><defs><linearGradient id="pw" x1="0" y1="0" x2="0" y2="1"><stop offset="0" stop-color="#4a78e0"/><stop offset=".5" stop-color="#1c4cc8"/><stop offset=".5" stop-color="#0c38b0"/><stop offset="1" stop-color="#2458cc"/></linearGradient></defs><rect x="0.5" y="0.5" width="28" height="22" rx="1.5" fill="url(#pw)" stroke="#6a8ee0" stroke-width="1"/><path d="M11 7 A6 6 0 1 0 18 7" fill="none" stroke="#fff" stroke-width="2.2" stroke-linecap="round"/><path d="M14.5 4.5 V11.5" stroke="#fff" stroke-width="2.2" stroke-linecap="round"/></svg>
<div class="cbx" style="left:455px;top:770.4px"></div>
<svg class="a" style="left:484px;top:771.4px" width="20" height="20" viewBox="0 0 20 20"><circle cx="10" cy="10" r="9" fill="#f4f4f4" stroke="#8a8a8a" stroke-width="1"/><path d="M10 1 A9 9 0 0 1 10 19 Z" fill="#1a1a1a"/></svg>
<svg class="a" style="left:484.5px;top:808.7px" width="14" height="14" viewBox="0 0 14 14"><path d="M7 0.5 V13.5 M0.5 7 H13.5" stroke="#0a0a0a" stroke-width="2"/></svg>
<div class="a" style="left:447px;top:503px;width:4px;height:4px;border-radius:2px;background:#2a2c2e"></div>
<div class="a" style="left:447px;top:511.5px;width:4px;height:4px;border-radius:2px;background:#2a2c2e"></div>
<div class="a" style="left:447px;top:520px;width:4px;height:4px;border-radius:2px;background:#2a2c2e"></div>
<div class="a" style="left:447px;top:529px;width:4px;height:4px;border-radius:2px;background:#2a2c2e"></div>
<div class="a" style="left:447px;top:538px;width:4px;height:4px;border-radius:2px;background:#2a2c2e"></div>
<div class="btn " style="left:543px;top:32px;width:89px;height:29px;line-height:27px;letter-spacing:-0.171px;padding-top:1.5px">10 FPS</div>
<div class="btn " style="left:642px;top:32px;width:41px;height:30px;line-height:28px;"></div>
<svg class="a" style="left:649px;top:35.5px" width="28" height="25" viewBox="0 0 28 25"><defs><linearGradient id="sc1" x1="0" y1="0" x2="1" y2="1"><stop offset="0" stop-color="#2f96ee"/><stop offset=".55" stop-color="#58b2f6"/><stop offset="1" stop-color="#8acaf8"/></linearGradient></defs><rect x="0.6" y="0.6" width="26.8" height="20.4" rx="1" fill="#b4b8bc" stroke="#686c70" stroke-width="1.1"/><rect x="2.6" y="2.6" width="22.8" height="15.4" fill="url(#sc1)" stroke="#4a4e52" stroke-width=".6"/><path d="M9.5 21 H18.5 L19.5 23.3 H8.5 Z" fill="#8e9296"/><rect x="7.5" y="23" width="13" height="1" fill="#a0a4a8"/><path d="M4.5 10.3 H23.5 M14 3.5 V17" stroke="#0a0a14" stroke-width="1"/><path d="M3.6 10.3 l3 -2.4 v4.8 z M24.4 10.3 l-3 -2.4 v4.8 z M14 3 l-2.2 2.6 h4.4 z M14 17.6 l-2.2 -2.6 h4.4 z" fill="#0a0a14"/><path d="M6 5 L10 8 M22 5 L18 8 M6 15.6 L10 12.6 M22 15.6 L18 12.6" stroke="#14203a" stroke-width=".9" opacity=".8"/></svg>
<div class="btn " style="left:693px;top:32px;width:42px;height:30px;line-height:28px;"></div>
<svg class="a" style="left:700px;top:35.5px" width="28" height="25" viewBox="0 0 28 25"><defs><linearGradient id="sc2" x1="0" y1="0" x2="1" y2="1"><stop offset="0" stop-color="#2f96ee"/><stop offset=".55" stop-color="#58b2f6"/><stop offset="1" stop-color="#8acaf8"/></linearGradient></defs><rect x="0.6" y="0.6" width="26.8" height="20.4" rx="1" fill="#b4b8bc" stroke="#686c70" stroke-width="1.1"/><rect x="2.6" y="2.6" width="22.8" height="15.4" fill="url(#sc2)" stroke="#4a4e52" stroke-width=".6"/><path d="M9.5 21 H18.5 L19.5 23.3 H8.5 Z" fill="#8e9296"/><rect x="7.5" y="23" width="13" height="1" fill="#a0a4a8"/><path d="M6 6 H12 M13.5 6 H16 M6 8.8 H9 M10.5 8.8 H17 M6 11.6 H8" stroke="#e4f2ff" stroke-width="1.2"/><circle cx="22" cy="16.5" r="4" fill="#e6e9ec" stroke="#7e8286" stroke-width="1.4" stroke-dasharray="1.5 1"/><circle cx="22" cy="16.5" r="1.5" fill="#8a8e92"/></svg>
<div class="btn " style="left:745px;top:32px;width:89px;height:29px;line-height:27px;"></div>
<svg class="a" style="left:760px;top:38px" width="17" height="17" viewBox="0 0 17 17"><defs><radialGradient id="mg0" cx=".4" cy=".35" r=".7"><stop offset="0" stop-color="#ffffff"/><stop offset="1" stop-color="#c4dcf4"/></radialGradient></defs><path d="M6.8 10.2 L2 15" stroke="#a8acb0" stroke-width="2.3" stroke-linecap="round"/><circle cx="10.5" cy="6.5" r="5" fill="url(#mg0)" stroke="#aeb2b6" stroke-width="1.2"/></svg>
<div class="t " style="left:783px;top:39px;letter-spacing:-0.306px;">100 %</div>
<div class="trk" style="left:857px;top:45px;width:172px;height:6px"></div><div class="thumb" style="left:875px;top:41px"></div>
<svg class="a" style="left:1069px;top:40px" width="17" height="17" viewBox="0 0 17 17"><defs><radialGradient id="mg1" cx=".4" cy=".35" r=".7"><stop offset="0" stop-color="#ffffff"/><stop offset="1" stop-color="#c4dcf4"/></radialGradient></defs><path d="M6.8 10.2 L2 15" stroke="#a8acb0" stroke-width="2.3" stroke-linecap="round"/><circle cx="10.5" cy="6.5" r="5" fill="url(#mg1)" stroke="#aeb2b6" stroke-width="1.2"/></svg>
<div class="t " style="left:1087px;top:40px;letter-spacing:-0.341px;">50%</div>
<svg class="a" style="left:1154px;top:40px" width="17" height="17" viewBox="0 0 17 17"><defs><radialGradient id="mg2" cx=".4" cy=".35" r=".7"><stop offset="0" stop-color="#ffffff"/><stop offset="1" stop-color="#c4dcf4"/></radialGradient></defs><path d="M6.8 10.2 L2 15" stroke="#a8acb0" stroke-width="2.3" stroke-linecap="round"/><circle cx="10.5" cy="6.5" r="5" fill="url(#mg2)" stroke="#aeb2b6" stroke-width="1.2"/></svg>
<div class="t " style="left:1172px;top:40px;letter-spacing:-0.341px;">100%</div>
<svg class="a" style="left:1245px;top:40px" width="17" height="17" viewBox="0 0 17 17"><defs><radialGradient id="mg3" cx=".4" cy=".35" r=".7"><stop offset="0" stop-color="#ffffff"/><stop offset="1" stop-color="#c4dcf4"/></radialGradient></defs><path d="M6.8 10.2 L2 15" stroke="#a8acb0" stroke-width="2.3" stroke-linecap="round"/><circle cx="10.5" cy="6.5" r="5" fill="url(#mg3)" stroke="#aeb2b6" stroke-width="1.2"/></svg>
<div class="t " style="left:1263px;top:40px;letter-spacing:-0.341px;">200%</div>
<div class="a" style="left:1326px;top:35px;width:12px;height:26px;background:linear-gradient(#5a7ed0,#2c50a8);overflow:hidden"><svg width="12" height="26" viewBox="0 0 12 26"><path d="M12 8 Q7 9 7 14 Q7 17 4 20 L2 24" fill="none" stroke="#fff" stroke-width="2"/></svg></div>
<div class="a" style="left:538px;top:69px;width:311px;height:290px;background:#000;overflow:hidden"><div class="a" style="left:100px;top:120px;width:130px;height:140px;filter:blur(3.2px)"><div class="a" style="left:32.5px;top:33px;width:63px;height:73px;border-radius:50%;background:radial-gradient(ellipse at 52% 48%,#8a8a8a 0,#848484 35%,#787878 65%,#686868 88%,#5c5c5c 100%)"></div><div class="a" style="left:38px;top:40px;width:28px;height:20px;border-radius:50%;background:radial-gradient(ellipse,rgba(60,60,60,.5),rgba(60,60,60,0) 70%)"></div><div class="a" style="left:66px;top:50px;width:18px;height:26px;border-radius:50%;transform:rotate(-25deg);background:radial-gradient(ellipse,rgba(60,60,60,.5),rgba(60,60,60,0) 70%)"></div><div class="a" style="left:60px;top:80px;width:26px;height:16px;border-radius:50%;background:radial-gradient(ellipse,rgba(60,60,60,.3),rgba(60,60,60,0) 70%)"></div><div class="a" style="left:62px;top:36px;width:24px;height:18px;border-radius:50%;background:radial-gradient(ellipse,rgba(190,190,190,.3),rgba(160,160,160,0) 70%)"></div></div></div>
<div class="t tah" style="left:550px;top:75px;color:#fa0000;font-size:12.5px;line-height:16px;letter-spacing:0.139px">Aide à la mise au point</div>
<div class="t tah" style="left:550px;top:95.5px;color:#6482e2;font-size:13.8px;line-height:16px;letter-spacing:0.188px">0/154 60%</div>
<div class="t tah" style="left:550px;top:114.3px;color:#00d600;font-size:13.8px;line-height:16px;letter-spacing:0.188px">0/144 56%</div>
<div class="t tah" style="left:550px;top:132px;color:#ee0000;font-size:13.8px;line-height:16px;letter-spacing:0.188px">0/149 58%</div>
<div class="a" style="left:538px;top:359px;width:311px;height:18px;background:#e3e3e3"></div>
<div class="a" style="left:538px;top:359px;width:185px;height:6px;background:#7f9cf4"></div>
<div class="a" style="left:538px;top:365px;width:174px;height:7px;background:#3ce84c"></div>
<div class="a" style="left:538px;top:372px;width:180px;height:5px;background:#f43c3c"></div>
<div class="a" style="left:569.0px;top:359px;width:1px;height:3px;background:#222"></div><div class="a" style="left:569.0px;top:375px;width:1px;height:3px;background:#222"></div>
<div class="t tah" style="left:559.5px;top:361px;width:22px;text-align:center;font-size:12.5px;line-height:16px;color:#111;letter-spacing:-.15px">10</div>
<div class="a" style="left:599.8px;top:359px;width:1px;height:3px;background:#222"></div><div class="a" style="left:599.8px;top:375px;width:1px;height:3px;background:#222"></div>
<div class="t tah" style="left:590.3px;top:361px;width:22px;text-align:center;font-size:12.5px;line-height:16px;color:#111;letter-spacing:-.15px">20</div>
<div class="a" style="left:630.7px;top:359px;width:1px;height:3px;background:#222"></div><div class="a" style="left:630.7px;top:375px;width:1px;height:3px;background:#222"></div>
<div class="t tah" style="left:621.2px;top:361px;width:22px;text-align:center;font-size:12.5px;line-height:16px;color:#111;letter-spacing:-.15px">30</div>
<div class="a" style="left:661.5px;top:359px;width:1px;height:3px;background:#222"></div><div class="a" style="left:661.5px;top:375px;width:1px;height:3px;background:#222"></div>
<div class="t tah" style="left:652.0px;top:361px;width:22px;text-align:center;font-size:12.5px;line-height:16px;color:#111;letter-spacing:-.15px">40</div>
<div class="a" style="left:692.4px;top:359px;width:1px;height:3px;background:#222"></div><div class="a" style="left:692.4px;top:375px;width:1px;height:3px;background:#222"></div>
<div class="t tah" style="left:682.9px;top:361px;width:22px;text-align:center;font-size:12.5px;line-height:16px;color:#111;letter-spacing:-.15px">50</div>
<div class="a" style="left:723.2px;top:359px;width:1px;height:3px;background:#222"></div><div class="a" style="left:723.2px;top:375px;width:1px;height:3px;background:#222"></div>
<div class="t tah" style="left:713.7px;top:361px;width:22px;text-align:center;font-size:12.5px;line-height:16px;color:#111;letter-spacing:-.15px">60</div>
<div class="a" style="left:754.1px;top:359px;width:1px;height:3px;background:#222"></div><div class="a" style="left:754.1px;top:375px;width:1px;height:3px;background:#222"></div>
<div class="t tah" style="left:744.6px;top:361px;width:22px;text-align:center;font-size:12.5px;line-height:16px;color:#111;letter-spacing:-.15px">70</div>
<div class="a" style="left:784.9px;top:359px;width:1px;height:3px;background:#222"></div><div class="a" style="left:784.9px;top:375px;width:1px;height:3px;background:#222"></div>
<div class="t tah" style="left:775.4px;top:361px;width:22px;text-align:center;font-size:12.5px;line-height:16px;color:#111;letter-spacing:-.15px">80</div>
<div class="a" style="left:815.8px;top:359px;width:1px;height:3px;background:#222"></div><div class="a" style="left:815.8px;top:375px;width:1px;height:3px;background:#222"></div>
<div class="t tah" style="left:806.2px;top:361px;width:22px;text-align:center;font-size:12.5px;line-height:16px;color:#111;letter-spacing:-.15px">90</div>
<div class="a" style="left:565px;top:423px;width:521px;height:189.5px;background:#fff;border:1px solid #999c9f;box-shadow:0 3px 14px rgba(0,0,0,.24),0 0 4px rgba(0,0,0,.16)"></div>
<div class="a" style="left:566px;top:460px;width:519px;height:151.5px;background:linear-gradient(#c42020 0,#8a1c1c 22%,#3a1c1c 42%,#1c1e1c 50%,#1c3a1c 58%,#1e7a1e 78%,#20c020 100%)"></div>
<div class="a" style="left:1083.6px;top:460px;width:1.4px;height:151.5px;background:rgba(0,0,0,.45)"></div>
<svg class="a" style="left:0;top:460px" width="1338" height="152" viewBox="0 460 1338 152"><polyline points="566.0,473.0 567.5,444.0 568.9,609.3 570.9,469.1 572.8,450.1 574.7,560.2 576.8,604.4 578.2,521.4 580.5,610.6 582.5,486.6 584.1,597.2 586.0,460.6 587.5,620.8 589.0,447.0 590.6,616.8 592.6,485.9 594.5,629.5 596.0,463.0 597.8,598.0 599.6,514.5 601.4,622.1 602.7,467.6 605.1,583.4 607.0,497.0 608.3,472.3 610.1,581.1 612.4,473.9 614.3,592.9 616.3,466.0 618.1,557.5 619.9,511.5 622.2,562.7 624.2,553.1 626.4,451.8 627.9,570.2 630.1,593.4 632.1,457.2 634.4,606.1 636.4,485.3 637.7,569.0 639.1,512.7 641.2,562.2 643.6,469.7 645.7,474.3 648.0,566.9 650.2,453.9 652.6,520.4 654.0,603.0 656.2,511.7 657.7,574.4 659.6,557.7 661.6,464.3 663.9,523.1 665.4,612.9 667.7,461.5 669.6,611.2 671.3,491.8 673.3,622.4 674.6,462.3 676.0,555.9 678.0,508.5 679.6,550.6 681.1,461.5 682.6,586.9 684.1,526.6 686.5,505.9 688.7,500.0 690.2,589.3 691.5,476.2 693.2,603.5 695.0,446.6 696.7,581.7 698.2,487.3 700.3,579.5 702.5,464.7 704.7,617.4 706.4,473.4 708.0,597.2 709.5,488.1 711.1,560.2 713.1,622.0 714.9,558.8 716.6,599.7 719.0,455.5 720.7,572.7 723.0,609.2 724.4,482.8 726.4,599.9 727.8,509.7 729.6,600.0 731.0,461.9 732.6,523" fill="none" stroke="#cacaca" stroke-width="1.5" stroke-opacity=".8" stroke-linejoin="miter"/></svg>
<svg class="a" style="left:577px;top:436px" width="16" height="12" viewBox="0 0 16 12"><rect width="16" height="12" fill="#222"/><rect x="0.5" y="0.5" width="15" height="11" fill="none" stroke="#555"/><path d="M1 7 H4 L5 5 L6.5 9.5 L8.5 2.5 L10 8 L11 6.5 H15" fill="none" stroke="#30e0c8" stroke-width="1.2"/></svg>
<div class="t " style="left:600px;top:434px;letter-spacing:-0.022px;font-size:14.6px;color:#939393">FWHM / FocusHelp</div>
<svg class="a" style="left:933px;top:435px" width="130" height="14" viewBox="0 0 130 14"><path d="M1 6.5 H13" stroke="#999" stroke-width="1"/><rect x="58.5" y="1.5" width="11" height="11" fill="none" stroke="#999" stroke-width="1"/><path d="M117 1 L129 13 M129 1 L117 13" stroke="#999" stroke-width="1.1"/></svg>
<div class="t " style="left:572.5px;top:463px;letter-spacing:-0.207px;color:#ff0808;letter-spacing:.08px">Max: 48.2</div>
<div class="t " style="left:572.5px;top:591.3px;letter-spacing:-0.300px;color:#08f008;letter-spacing:.08px">Min: 46.3</div>
<div class="t " style="left:735px;top:501px;letter-spacing:0.208px;color:#d4d4d4;font-weight:bold;font-size:15.5px">47.5</div>
</body></html>
